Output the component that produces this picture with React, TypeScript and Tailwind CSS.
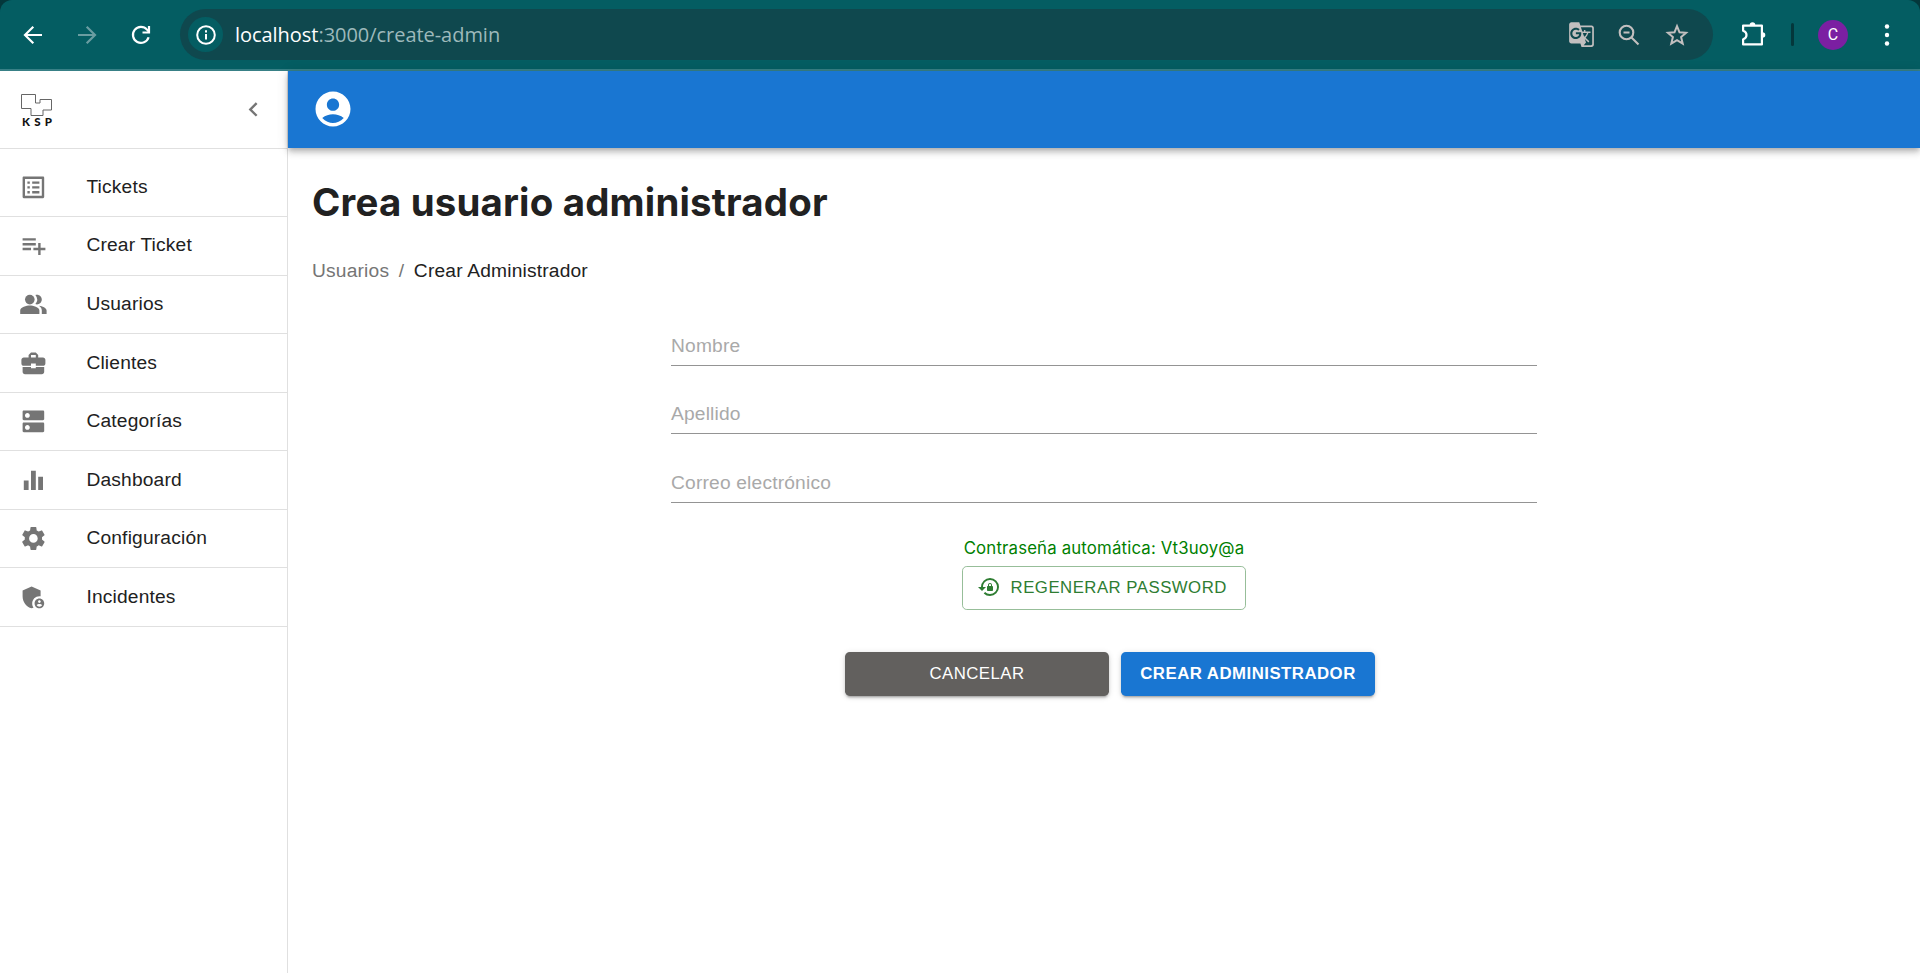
import React from "react";
import {
  MdListAlt,
  MdPlaylistAdd,
  MdPeopleAlt,
  MdBusinessCenter,
  MdDns,
  MdEqualizer,
  MdSettings,
  MdAdminPanelSettings,
  MdLockReset,
  MdAccountCircle,
  MdChevronLeft,
  MdGTranslate,
} from "react-icons/md";

const NAV = [
  { label: "Tickets", Icon: MdListAlt },
  { label: "Crear Ticket", Icon: MdPlaylistAdd },
  { label: "Usuarios", Icon: MdPeopleAlt },
  { label: "Clientes", Icon: MdBusinessCenter },
  { label: "Categorías", Icon: MdDns },
  { label: "Dashboard", Icon: MdEqualizer },
  { label: "Configuración", Icon: MdSettings },
  { label: "Incidentes", Icon: MdAdminPanelSettings },
];

const FIELDS = ["Nombre", "Apellido", "Correo electrónico"];

function BrowserBar() {
  return (
    <div className="bg-[#04373b]">
      <header className="flex h-[71px] items-center rounded-t-[12px] border-b-2 border-[#388086] bg-[#045d62] text-white">
        <svg className="ml-[23px] h-5 w-5 shrink-0" viewBox="0 0 20 20" fill="none" stroke="currentColor" strokeWidth="2.2">
          <path d="M19 10H2.5M10.3 1.7L2 10l8.3 8.3" />
        </svg>
        <svg className="ml-[34px] h-5 w-5 shrink-0 text-[#6a9da1]" viewBox="0 0 20 20" fill="none" stroke="currentColor" strokeWidth="2.2">
          <path d="M1 10h16.500M9.700 1.700L18 10l-8.300 8.300" />
        </svg>
        <svg className="ml-[34px] h-5 w-5 shrink-0" viewBox="0 0 20 20" fill="none" stroke="currentColor" strokeWidth="2.2">
          <path d="M17.600 12.200A8 8 0 1 1 16 4.600L17.800 6.600" />
          <path d="M18 1v6.500h-6.500" />
        </svg>
        <div className="ml-[29px] flex h-[51px] w-[1533px] items-center rounded-full bg-[#0f484e] pl-2">
          <div className="flex h-[35px] w-[35px] items-center justify-center rounded-full bg-[#045d62]">
            <svg className="h-5 w-5" viewBox="0 0 20 20" fill="none" stroke="currentColor" strokeWidth="2">
              <circle cx="10" cy="10" r="8.800" />
              <path d="M10 9v5.500M10 5.300v2.200" />
            </svg>
          </div>
          <p className="ml-[12px] font-['Open_Sans','Noto_Sans',sans-serif] text-[20px] leading-none tracking-[-0.04px] text-[#9db9bb]">
            <span className="text-white">localhost</span>:3000/create-admin
          </p>
          <div className="ml-auto flex items-center pr-[24px] text-[#c2bfbf]">
            <MdGTranslate className="h-[27px] w-[27px]" />
            <svg className="ml-[23px] h-[22px] w-[22px]" viewBox="0 0 22 22" fill="none" stroke="currentColor" strokeWidth="2.100">
              <circle cx="8.500" cy="8.500" r="6.800" />
              <path d="M13.500 13.500l7 7M5.500 8.500h6" />
            </svg>
            <svg className="ml-[25px] h-6 w-6" viewBox="0 0 24 24" fill="none" stroke="currentColor" strokeWidth="2">
              <path d="M12 3.200l2.500 6.100 6.600.5-5 4.300 1.600 6.500L12 17.100l-5.700 3.500 1.600-6.500-5-4.300 6.600-.5z" />
            </svg>
          </div>
        </div>
        <svg className="ml-[28px] h-[26px] w-[26px] shrink-0" viewBox="0 0 26 26" fill="none" stroke="currentColor" strokeWidth="2.200" strokeLinejoin="round">
          <path d="M2.100 3.600h18.800v18.800H2.100v-5.200q3.400-1 3.400-4.200t-3.400-4.200z" />
          <path d="M8.700 3a2.800 2.800 0 0 1 5.600 0zM21.500 10.200a2.800 2.800 0 0 1 0 5.600z" fill="currentColor" stroke="none" />
        </svg>
        <div className="ml-[24px] h-[23px] w-[3px] rounded-full bg-[#04373b]" />
        <div className="ml-[24px] flex h-[30px] w-[30px] items-center justify-center rounded-full bg-[#7b1fa2] font-[Roboto,sans-serif] text-[16px]">
          C
        </div>
        <svg className="ml-[36px] h-6 w-[6px] shrink-0" viewBox="0 0 6 24" fill="currentColor">
          <circle cx="3" cy="3.500" r="2.200" />
          <circle cx="3" cy="12" r="2.200" />
          <circle cx="3" cy="20.500" r="2.200" />
        </svg>
      </header>
    </div>
  );
}

function Logo() {
  return (
    <svg className="mt-[3px] h-9 w-8" viewBox="0 0 32 36">
      <path d="M.5 1.500h14v8.500H19V6.500h11.500V17H22v5.500H10V15.500H.5z" fill="none" stroke="#666" strokeWidth="1" />
      <text x="1" y="33.200" fontFamily="Lato" fontWeight="900" fontSize="11.500" fill="#111" textLength="30">
        KSP
      </text>
    </svg>
  );
}

function Sidebar() {
  return (
    <aside className="w-[288px] shrink-0 border-r border-[#e0e0e0] bg-white">
      <div className="flex h-[77.800px] items-center justify-between border-b border-[#e0e0e0] pr-[19px] pl-[21px]">
        <Logo />
        <MdChevronLeft className="h-[28.800px] w-[28.800px] text-[#757575]" />
      </div>
      <nav className="pt-[9.600px]">
        {NAV.map(({ label, Icon }) => (
          <a key={label} className="flex h-[58.580px] items-center border-b border-[#e0e0e0] pl-[19.200px]">
            <Icon className="h-[28.800px] w-[28.800px] text-[#757575]" />
            <span className="ml-[38.400px] text-[19.200px] leading-[28.800px] tracking-[0.00938em]">{label}</span>
          </a>
        ))}
      </nav>
    </aside>
  );
}

export default function App() {
  return (
    <div className="flex h-[973px] w-[1920px] flex-col overflow-hidden bg-white font-['Liberation_Sans',Arial,sans-serif] text-[#212121]">
      <BrowserBar />
      <div className="flex min-h-0 flex-1">
        <Sidebar />
        <div className="flex min-w-0 flex-1 flex-col">
          <div className="flex h-[76.800px] shrink-0 items-center bg-[#1976d2] pl-6 text-white shadow-[0_2px_5px_-1px_rgba(0,0,0,0.2),0_5px_6px_0_rgba(0,0,0,0.14),0_1px_12px_0_rgba(0,0,0,0.12)]">
            <MdAccountCircle className="h-[42px] w-[42px]" />
          </div>
          <main className="flex flex-col px-6 pt-[31.200px]">
            <h1 className="font-[Inter,sans-serif] text-[38.400px] leading-[46px] font-bold tracking-[0.190px]">Crea usuario administrador</h1>
            <div className="mt-[31px] flex text-[19.200px] leading-[29px] tracking-[0.00938em]">
              <span className="text-[#757575]">Usuarios</span>
              <span className="mx-[9.600px] text-[#757575]">/</span>
              <span>Crear Administrador</span>
            </div>
            <form className="mt-[41.800px] flex w-[866px] flex-col self-center">
              {FIELDS.map((f) => (
                <label key={f} className="mb-[29.200px] flex h-[39.200px] items-center border-b border-[#949494] pt-[1.200px] text-[19.200px] tracking-[0.00938em] text-[#a9a9a9]">
                  {f}
                </label>
              ))}
              <div className="mt-[4.500px] flex flex-col items-center">
                <p className="font-[Inter,sans-serif] text-[16.800px] leading-[24px] tracking-[0.01em] text-[#008000]">
                  Contraseña automática: Vt3uoy@a
                </p>
                <button type="button" className="mt-[5.500px] flex h-[44px] w-[284px] items-center rounded-[4.800px] border border-[#97be99] pb-px pl-[14px] text-[16.800px] tracking-[0.02857em] text-[#2e7d32]">
                  <MdLockReset className="mr-[9.600px] h-6 w-6" />
                  REGENERAR PASSWORD
                </button>
              </div>
              <div className="mt-[42px] ml-[174px] flex gap-3">
                <button type="button" className="h-11 w-[264px] rounded-[4.800px] bg-[#62605e] pb-px text-[16.800px] tracking-[0.02857em] text-white shadow-[0_3px_2px_-2px_rgba(0,0,0,0.2),0_2px_3px_0_rgba(0,0,0,0.14),0_1px_6px_0_rgba(0,0,0,0.12)]">
                  CANCELAR
                </button>
                <button type="button" className="h-11 w-[254px] rounded-[4.800px] bg-[#1976d2] pb-px text-[16.800px] font-bold tracking-[0.02857em] whitespace-nowrap text-white shadow-[0_3px_2px_-2px_rgba(0,0,0,0.2),0_2px_3px_0_rgba(0,0,0,0.14),0_1px_6px_0_rgba(0,0,0,0.12)]">
                  CREAR ADMINISTRADOR
                </button>
              </div>
            </form>
          </main>
        </div>
      </div>
    </div>
  );
}
